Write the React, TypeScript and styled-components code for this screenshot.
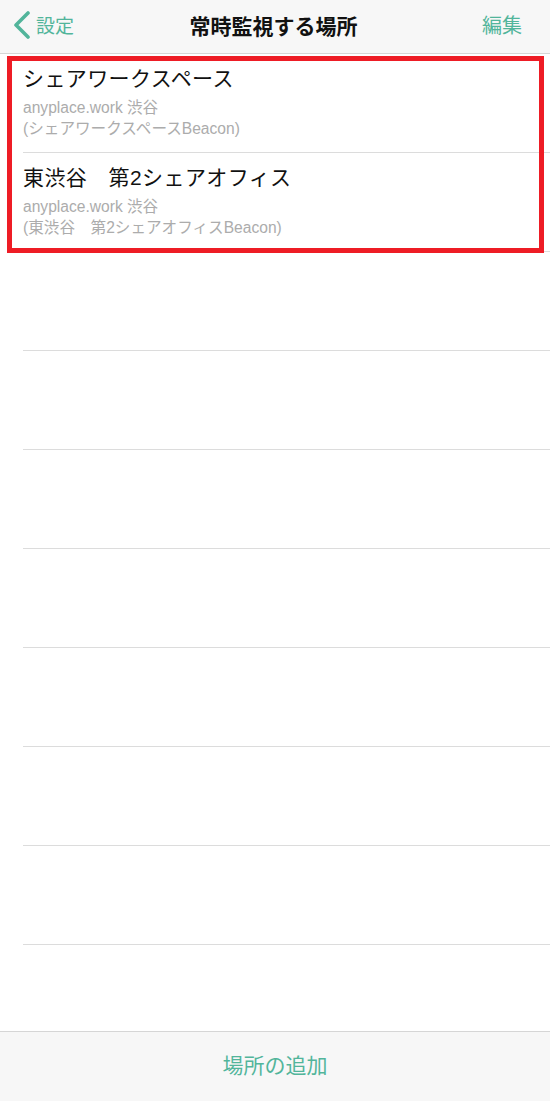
import React from 'react';
import styled, { createGlobalStyle } from 'styled-components';

const GlobalStyle = createGlobalStyle`
  html, body {
    margin: 0;
    padding: 0;
    background: #ffffff;
  }
  body {
    font-family: 'Liberation Sans', 'Noto Sans CJK JP', sans-serif;
  }
`;

const ACCENT = '#52b59b';

const Screen = styled.div`
  position: relative;
  width: 550px;
  height: 1101px;
  display: flex;
  flex-direction: column;
  background: #ffffff;
  overflow: hidden;
`;

const NavBar = styled.header`
  height: 54px;
  flex: none;
  box-sizing: border-box;
  padding-bottom: 4px;
  display: grid;
  grid-template-columns: 1fr auto 1fr;
  align-items: center;
  background: #f7f7f7;
  border-bottom: 1px solid #d6d6d6;
`;

const BackButton = styled.div`
  display: flex;
  align-items: center;
  gap: 5px;
  padding-left: 12px;
  color: ${ACCENT};
  font-size: 19px;
  font-family: 'Noto Sans CJK JP', sans-serif;
  justify-self: start;
`;

const Title = styled.h1`
  margin: 0 3px 0 0;
  font-size: 21px;
  font-weight: bold;
  color: #111;
  font-family: 'Noto Sans CJK JP', sans-serif;
`;

const EditButton = styled.div`
  justify-self: end;
  padding-right: 28px;
  color: ${ACCENT};
  font-size: 20px;
  font-family: 'Noto Sans CJK JP', sans-serif;
`;

const List = styled.ul`
  flex: 1;
  margin: 0;
  padding: 0;
  list-style: none;
`;

const Row = styled.li`
  height: 98px;
  margin-left: 23px;
  border-bottom: 1px solid #dcdcdc;
  display: flex;
  flex-direction: column;
`;

const RowTitle = styled.div`
  margin-top: 12px;
  font-size: 21px;
  letter-spacing: 0.4px;
  line-height: 26px;
  color: #111;
  white-space: pre;
`;

const RowSub = styled.div<{ $first?: boolean }>`
  margin-top: ${p => (p.$first ? '5px' : '0')};
  font-size: 15.6px;
  line-height: 21px;
  color: #acacac;
  white-space: pre;
`;

const Highlight = styled.div`
  position: absolute;
  top: 56px;
  left: 7px;
  width: 537px;
  height: 197px;
  box-sizing: border-box;
  border: 5px solid #ee1c25;
  pointer-events: none;
`;

const TabBar = styled.footer`
  height: 70px;
  flex: none;
  box-sizing: border-box;
  padding-bottom: 6px;
  display: flex;
  align-items: center;
  justify-content: center;
  background: #f7f7f7;
  border-top: 1px solid #d6d6d6;
  color: ${ACCENT};
  font-size: 21px;
  font-family: 'Noto Sans CJK JP', sans-serif;
`;

const places = [
  {
    name: 'シェアワークスペース',
    area: 'anyplace.work 渋谷',
    beacon: '(シェアワークスペースBeacon)',
  },
  {
    name: '東渋谷　第2シェアオフィス',
    area: 'anyplace.work 渋谷',
    beacon: '(東渋谷　第2シェアオフィスBeacon)',
  },
];

const EMPTY_ROWS = 7;

function App() {
  return (
    <Screen>
      <GlobalStyle />
      <NavBar>
        <BackButton>
          <svg width="19" height="28" viewBox="0 0 19 28">
            <path
              d="M16 2 L4 14 L16 26"
              fill="none"
              stroke={ACCENT}
              strokeWidth="3.6"
              strokeLinecap="round"
              strokeLinejoin="round"
            />
          </svg>
          <span>設定</span>
        </BackButton>
        <Title>常時監視する場所</Title>
        <EditButton>編集</EditButton>
      </NavBar>
      <List>
        {places.map(p => (
          <Row key={p.name}>
            <RowTitle>{p.name}</RowTitle>
            <RowSub $first>{p.area}</RowSub>
            <RowSub>{p.beacon}</RowSub>
          </Row>
        ))}
        {Array.from({ length: EMPTY_ROWS }).map((_, i) => (
          <Row key={'empty-' + i} />
        ))}
      </List>
      <TabBar>場所の追加</TabBar>
      <Highlight />
    </Screen>
  );
}

export default App;
